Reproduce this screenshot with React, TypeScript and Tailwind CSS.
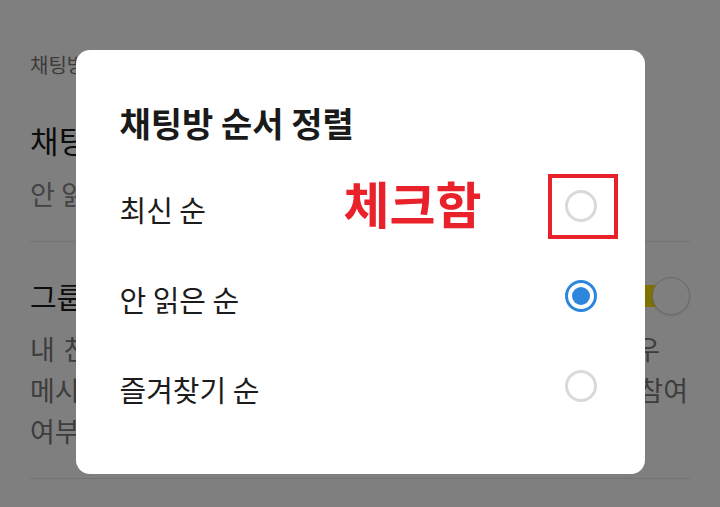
import { useState } from 'react'

type SortKey = 'recent' | 'unread' | 'favorite'

const options: { key: SortKey; label: string }[] = [
  { key: 'recent', label: '최신 순' },
  { key: 'unread', label: '안 읽은 순' },
  { key: 'favorite', label: '즐겨찾기 순' },
]

const Radio = ({ checked }: { checked: boolean }) =>
  checked ? (
    <span className="flex h-[32px] w-[32px] items-center justify-center rounded-full border-[3px] border-[#2c86dc]">
      <span className="h-[18px] w-[18px] rounded-full bg-[#2c86dc]" />
    </span>
  ) : (
    <span className="block h-[32px] w-[32px] rounded-full border-[3px] border-[#d9d9d9]" />
  )

const Toggle = () => (
  <div className="relative flex h-[38px] w-[62px] items-center">
    <div className="h-[22px] w-[54px] rounded-full bg-[#fee500]" />
    <div className="absolute right-0 top-0 h-[38px] w-[38px] rounded-full border border-[#d4d4d4] bg-white shadow" />
  </div>
)

export default function App() {
  const [sort, setSort] = useState<SortKey>('unread')

  return (
    <div className="relative h-[507px] w-full overflow-hidden bg-white font-['Noto_Sans_CJK_KR','Noto_Sans',sans-serif]">
      {/* settings page behind the dialog */}
      <div className="flex flex-col px-[30px] pt-[50px]">
        <div className="flex h-[30px] items-center text-[20px] leading-none text-[#787878]">
          채팅방 목록
        </div>
        <div className="mt-[39px] flex h-[40px] items-center text-[31px] leading-none text-[#1a1a1a]">
          채팅방 정렬
        </div>
        <div className="mt-[16px] flex h-[36px] items-center text-[27px] leading-none text-[#888]">
          안 읽은 순
        </div>
        <div className="mt-[30px] h-px bg-[#e8e8e8]" />
        <div className="mt-[34px] flex h-[40px] items-center justify-between">
          <span className="text-[29px] leading-none text-[#1a1a1a]">
            그룹채팅방 참여 설정
          </span>
          <Toggle />
        </div>
        <div className="mt-[12px] text-[27px] leading-[41px] text-[#7a7a7a]">
          <div className="w-[630px] whitespace-nowrap text-justify [text-align-last:justify]">
            내 친구가 아닌 사람이 나를 그룹채팅방에 초대하는 경우
          </div>
          <div className="w-[658px] whitespace-nowrap text-justify [text-align-last:justify]">
            메시지를 받기 전 초대받은 채팅방 정보를 확인하고 참여
          </div>
          <div className="whitespace-nowrap">여부를 선택할 수 있습니다.</div>
        </div>
        <div className="mt-[27px] h-px bg-[#e8e8e8]" />
      </div>

      {/* dim + dialog */}
      <div className="absolute inset-0 flex items-start justify-center bg-black/50 pt-[50px]">
        <div className="flex h-[424px] w-[569px] flex-col rounded-[14px] bg-white pt-[49px]">
          <div className="flex h-[48px] items-center pl-[44px] text-[34px] font-bold leading-none text-[#1a1a1a]">
            채팅방 순서 정렬
          </div>
          <div className="mt-[17px] flex flex-col">
            {options.map(opt => (
              <button
                key={opt.key}
                onClick={() => setSort(opt.key)}
                className="relative flex h-[90px] items-center justify-between pl-[44px] pr-[48px] text-left"
              >
                <span className="text-[29px] leading-none text-[#1c1c1c]">
                  {opt.label}
                </span>
                {opt.key === 'recent' && (
                  <span className="absolute left-[268px] top-[13px] text-[50px] font-bold leading-none text-[#e8212b]">
                    체크함
                  </span>
                )}
                <span className="relative mb-[6px]">
                  <Radio checked={sort === opt.key} />
                  {opt.key === 'recent' && (
                    <span className="absolute -bottom-[17px] -left-[17px] -right-[21px] -top-[16px] border-4 border-[#e8212b]" />
                  )}
                </span>
              </button>
            ))}
          </div>
        </div>
      </div>
    </div>
  )
}
